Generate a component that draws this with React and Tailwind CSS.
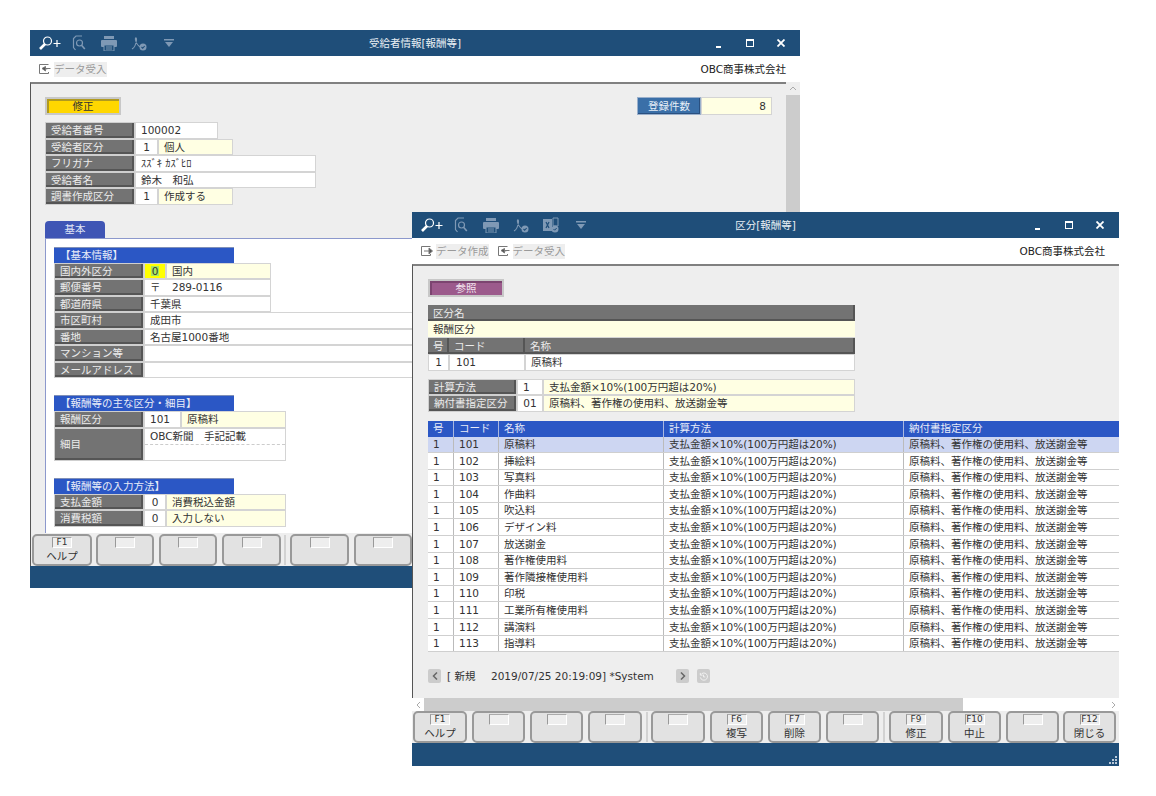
import React from "react";

const FONT = { fontFamily: '"DejaVu Sans", "Noto Sans CJK JP", sans-serif' };

function ZoomPlusIcon() {
	return (
		<svg viewBox="0 0 24 14" className="h-[14px] w-[24px]" fill="none" stroke="white" strokeWidth="1.2">
			<circle cx="9.500" cy="5" r="4" />
			<path d="M7 8 2 13" strokeWidth="2.600" />
			<path d="M15.500 7.500h7M19 4v7" strokeWidth="1.200" />
		</svg>
	);
}

function PreviewIcon() {
	return (
		<svg viewBox="0 0 14 16" className="h-[16px] w-[14px]" fill="none" stroke="#7f99b5" strokeWidth="1.200">
			<path d="M10 1H4L1.500 3.500v9L3.500 15" />
			<circle cx="7.500" cy="8" r="3" />
			<path d="m9.800 10.500 3 3.500" strokeWidth="1.600" />
		</svg>
	);
}

function PrinterIcon() {
	return (
		<svg viewBox="0 0 16 15" className="h-[15px] w-[16px]" fill="#7f99b5">
			<rect x="3" y="0" width="10" height="3" />
			<rect x="0" y="4" width="16" height="7" rx="1" />
			<rect x="3" y="9" width="10" height="6" fill="#1f4e79" stroke="#7f99b5" />
			<path d="M5 11h6M5 13h6" stroke="#7f99b5" />
		</svg>
	);
}

function PdfIcon() {
	return (
		<svg viewBox="0 0 16 15" className="h-[15px] w-[16px]" fill="none" stroke="#7f99b5" strokeWidth="1.100">
			<path d="M1 13c2-1 4-5 4.500-9 .2-3-1.500-3-1 0 .8 4 3 6 5 7" />
			<circle cx="12" cy="11" r="3.500" fill="#7f99b5" stroke="none" />
			<path d="m10.500 11 1.200 1.200 2-2.200" stroke="#1f4e79" />
		</svg>
	);
}

function ExcelIcon() {
	return (
		<svg viewBox="0 0 16 16" className="h-[16px] w-[16px]" fill="#7f99b5">
			<rect x="0" y="2" width="9" height="12" />
			<path d="M10 1h5v8h-5z" fill="none" stroke="#7f99b5" />
			<path d="m3 5 3 6M6 5l-3 6" stroke="#1f4e79" strokeWidth="1.200" />
			<circle cx="12" cy="12" r="3.500" />
			<path d="m10.500 12 1.200 1.200 2-2.200" stroke="#1f4e79" fill="none" />
		</svg>
	);
}

function DropIcon() {
	return (
		<svg viewBox="0 0 10 9" className="h-[9px] w-[10px]" fill="#7f99b5">
			<rect x="0" y="0" width="10" height="1.500" />
			<path d="M1 3h8L5 8z" />
		</svg>
	);
}

function TitleBar({ title, excel }) {
	return (
		<div className="grid h-[26px] shrink-0 grid-cols-[1fr_auto_1fr] items-center bg-[#1f4e79] text-[10.500px] text-[#e8eef4]">
			<div className="flex items-center pl-[8px]">
				<div className="mr-[2px] flex w-[24px]"><ZoomPlusIcon /></div>
				<div className="flex w-[30px] justify-center"><PreviewIcon /></div>
				<div className="flex w-[30px] justify-center"><PrinterIcon /></div>
				<div className="flex w-[30px] justify-center"><PdfIcon /></div>
				{excel && <div className="flex w-[30px] justify-center"><ExcelIcon /></div>}
				<div className="flex w-[30px] justify-center"><DropIcon /></div>
			</div>
			<div>{title}</div>
			<div className="flex items-center justify-end pr-[4px]">
				<div className="flex h-[14px] w-[31px] items-end justify-center pb-[2px]"><div className="h-[2px] w-[5px] bg-white" /></div>
				<div className="flex w-[31px] justify-center"><div className="h-[8px] w-[8px] border border-t-2 border-white" /></div>
				<div className="flex w-[31px] justify-center">
					<svg viewBox="0 0 8 8" className="h-[8px] w-[8px]" stroke="white" strokeWidth="1.800"><path d="m0.500 0.500 7 7M7.500 0.500l-7 7" /></svg>
				</div>
			</div>
		</div>
	);
}

function ExportIcon({ back }) {
	return (
		<svg viewBox="0 0 12 12" className="h-[12px] w-[12px]" fill="none" stroke="#777">
			<path d="M9.500 1.500h-9v9h9V9" />
			{back ? <path d="M11.500 5.500H6.500V3.500L3 5.500l3.500 2.500V6.500" fill="#555" /> : <path d="M3 6h5.500M8 3l3.500 3L8 9z" fill="#555" />}
		</svg>
	);
}

function ToolButton({ label, back }) {
	return (
		<div className="flex items-center gap-[3px]">
			<ExportIcon back={back} />
			<span className="flex h-[15px] items-center bg-[#eeeeee] text-[10.500px] text-[#9a9a9a]">{label}</span>
		</div>
	);
}

function Label({ children, className = "w-[90px]" }) {
	return (
		<div className={`flex shrink-0 items-center border border-[#cfcfcf] bg-[#737373] pl-[5px] text-[#ececec] shadow-[inset_-2px_-2px_0_#555] ${className}`}>
			{children}
		</div>
	);
}

function Val({ children, className = "", center }) {
	return (
		<div className={`flex shrink-0 items-center border border-[#d4d4d4] bg-white px-[5px] ${center ? "justify-center" : ""} ${className}`}>
			{children}
		</div>
	);
}

function Name({ children, className = "" }) {
	return (
		<div className={`flex shrink-0 items-center border border-[#d4d4d4] bg-[#ffffe3] pl-[5px] ${className}`}>
			{children}
		</div>
	);
}

function Row({ children }) {
	return <div className="flex h-[16.500px]">{children}</div>;
}

function SectionHead({ children }) {
	return (
		<div className="flex h-[16px] w-[180px] items-center border-t border-[#8090b8] bg-[#2b57c5] pl-[6px] text-[#e8ecf8]">{children}</div>
	);
}

function FnKey({ fkey, label, className }) {
	return (
		<div className={`flex h-[32px] flex-col items-center rounded-[5px] border-2 border-[#999999] bg-[#e2e2e2] ${className}`}>
			<div className="mt-[1px] flex h-[11px] w-[20px] items-center justify-center border-t border-r border-b border-l border-t-[#aaa] border-r-white border-b-white border-l-[#999] bg-[#eeeeee] text-[9px] leading-none text-[#333]">
				{fkey}
			</div>
			{label && <div className="mt-[1px] text-[10.500px] leading-[14px] text-[#333]">{label}</div>}
		</div>
	);
}

function FnSep() {
	return <div className="mr-[-2px] ml-[-1px] h-[30px] w-[2px] self-center bg-[#d2d2d2]" />;
}

function BackWindow() {
	return (
		<div className="absolute top-[30px] left-[30px] flex h-[558px] w-[770px] flex-col bg-white">
			<TitleBar title="受給者情報[報酬等]" />
			<div className="flex h-[26px] shrink-0 items-center pr-[14px] pl-[9px]">
				<ToolButton label="データ受入" back />
				<div className="ml-auto text-[10.500px] text-[#222]">OBC商事株式会社</div>
			</div>
			<div className="flex min-h-0 flex-1">
				<div className="flex min-w-0 flex-1 flex-col overflow-hidden border-t-2 border-l border-t-[#808080] border-l-[#555] bg-[#eeeeee] pt-[13px] pl-[14px]">
					<div className="flex items-start justify-between pr-[14px]">
						<div className="flex h-[18px] w-[76px] items-center justify-center border-2 border-[#c8c8c8] bg-[#ffd700] text-[#333] shadow-[inset_2px_2px_0_#b09a20]">修正</div>
						<div className="flex h-[18px]">
							<div className="flex w-[64px] items-center justify-center border border-[#9ab0cc] bg-[#3a6fa8] text-[#e8f0f8] shadow-[inset_-1px_-1px_0_#2a5080]">登録件数</div>
							<div className="flex w-[71px] items-center justify-end border border-[#d4d4d4] bg-[#ffffe3] pr-[5px]">8</div>
						</div>
					</div>
					<div className="mt-[7px]">
						<Row><Label>受給者番号</Label><Val className="w-[83px]">100002</Val></Row>
						<Row><Label>受給者区分</Label><Val center className="w-[23px]">1</Val><Name className="w-[75px]">個人</Name></Row>
						<Row><Label>フリガナ</Label><Val className="w-[181px]">ｽｽﾞｷ ｶｽﾞﾋﾛ</Val></Row>
						<Row><Label>受給者名</Label><Val className="w-[181px]">鈴木　和弘</Val></Row>
						<Row><Label>調書作成区分</Label><Val center className="w-[23px]">1</Val><Name className="w-[75px]">作成する</Name></Row>
					</div>
					<div className="mt-[16px] flex h-[17px] w-[60px] items-center justify-center rounded-t-[4px] bg-[#3f55b5] text-[#dfe4f5]">基本</div>
					<div className="flex-1 border-t border-l border-[#8c98cc] bg-white pt-[8px] pl-[8px]">
						<SectionHead>【基本情報】</SectionHead>
						<Row><Label>国内外区分</Label><div className="flex w-[22px] items-center justify-center border border-[#d4d4d4] bg-[#ffff00]"><span className="bg-[#a8e860] px-[1px]">0</span></div><Name className="w-[105px]">国内</Name></Row>
						<Row><Label>郵便番号</Label><Val className="w-[127px]"><span className="w-[22px]">〒</span>289-0116</Val></Row>
						<Row><Label>都道府県</Label><Val className="w-[127px]">千葉県</Val></Row>
						<Row><Label>市区町村</Label><Val className="w-[540px]">成田市</Val></Row>
						<Row><Label>番地</Label><Val className="w-[540px]">名古屋1000番地</Val></Row>
						<Row><Label>マンション等</Label><Val className="w-[540px]" /></Row>
						<Row><Label>メールアドレス</Label><Val className="w-[540px]" /></Row>
						<div className="mt-[17px]"><SectionHead>【報酬等の主な区分・細目】</SectionHead></div>
						<Row><Label>報酬区分</Label><Val className="w-[37px]">101</Val><Name className="w-[105px]">原稿料</Name></Row>
						<div className="flex h-[33px]">
							<Label>細目</Label>
							<div className="flex w-[142px] flex-col border border-[#d4d4d4] bg-white">
								<div className="flex h-[16px] items-center border-b border-dashed border-[#cccccc] px-[5px]">OBC新聞　手記記載</div>
							</div>
						</div>
						<div className="mt-[17px]"><SectionHead>【報酬等の入力方法】</SectionHead></div>
						<Row><Label>支払金額</Label><Val center className="w-[22px]">0</Val><Name className="w-[120px]">消費税込金額</Name></Row>
						<Row><Label>消費税額</Label><Val center className="w-[22px]">0</Val><Name className="w-[120px]">入力しない</Name></Row>
					</div>
				</div>
				<div className="flex w-[14px] shrink-0 flex-col bg-[#cccccc]">
					<div className="flex h-[13px] items-center justify-center bg-[#eeeeee]">
						<svg viewBox="0 0 8 5" className="h-[5px] w-[8px]" fill="none" stroke="#aaa"><path d="m1 4 3-3 3 3" /></svg>
					</div>
				</div>
			</div>
			<div className="flex h-[33px] shrink-0 items-start gap-[4px] border-l border-[#555] bg-[#eeeeee] pt-[1px] pl-[1px]">
				<FnKey fkey="F1" label="ヘルプ" className="w-[60px]" />
				<FnKey className="w-[58px]" />
				<FnKey className="ml-[1px] w-[58px]" />
				<FnKey className="ml-[1px] w-[59px]" />
				<FnSep />
				<FnKey className="ml-[2px] w-[59px]" />
				<FnKey className="ml-[1px] w-[58px]" />
			</div>
			<div className="h-[22px] shrink-0 bg-[#1f4e79]" />
		</div>
	);
}

const CALC = "支払金額×10%(100万円超は20%)";
const NOUHU = "原稿料、著作権の使用料、放送謝金等";
const ROWS = [
	["101", "原稿料"],
	["102", "挿絵料"],
	["103", "写真料"],
	["104", "作曲料"],
	["105", "吹込料"],
	["106", "デザイン料"],
	["107", "放送謝金"],
	["108", "著作権使用料"],
	["109", "著作隣接権使用料"],
	["110", "印税"],
	["111", "工業所有権使用料"],
	["112", "講演料"],
	["113", "指導料"],
];

function HeadCell({ children, className }) {
	return (
		<div className={`flex items-center bg-[#737373] pl-[5px] text-[#ececec] shadow-[inset_-2px_-2px_0_#555] ${className}`}>{children}</div>
	);
}

function DataTable() {
	return (
		<div className="mt-[9px]">
			<div className="grid h-[16px] grid-cols-[26px_45px_165px_240px_216px] bg-[#2b57c5] text-[#e8ecf8]">
				{["号", "コード", "名称", "計算方法", "納付書指定区分"].map((h) => (
					<div key={h} className="flex items-center border-r border-[#aab8e0] pl-[5px]">{h}</div>
				))}
			</div>
			{ROWS.map(([code, name], i) => (
				<div key={code} className={`grid h-[16.600px] grid-cols-[26px_45px_165px_240px_216px] border-b border-[#cfcfcf] ${i === 0 ? "bg-[#cdd6f2]" : "bg-white"}`}>
					<div className="flex items-center border-r border-[#bbbbbb] pl-[5px]">1</div>
					<div className="flex items-center border-r border-[#bbbbbb] pl-[5px]">{code}</div>
					<div className="flex items-center border-r border-[#bbbbbb] pl-[5px]">{name}</div>
					<div className="flex items-center border-r border-[#bbbbbb] pl-[5px]">{CALC}</div>
					<div className="flex items-center pl-[5px] whitespace-nowrap">{NOUHU}</div>
				</div>
			))}
		</div>
	);
}

function NavButton({ children }) {
	return (
		<div className="flex h-[14px] w-[13px] items-center justify-center rounded-[2px] bg-[#cccccc]">{children}</div>
	);
}

function FrontWindow() {
	return (
		<div className="absolute top-[212px] left-[412px] flex h-[554px] w-[707px] flex-col bg-white">
			<TitleBar title="区分[報酬等]" excel />
			<div className="flex h-[26px] shrink-0 items-center pr-[14px] pl-[9px]">
				<ToolButton label="データ作成" />
				<div className="ml-[9px]"><ToolButton label="データ受入" back /></div>
				<div className="ml-auto text-[10.500px] text-[#222]">OBC商事株式会社</div>
			</div>
			<div className="min-h-0 flex-1 overflow-hidden border-t-2 border-l border-t-[#808080] border-l-[#555] bg-[#eeeeee] pt-[13px] pl-[15px]">
				<div className="flex h-[18px] w-[76px] items-center justify-center border-2 border-[#c8c8c8] bg-[#9c5a8c] text-[#f2e4ee] shadow-[inset_2px_2px_0_#7c4470]">参照</div>
				<div className="mt-[8px] w-[427px]">
					<HeadCell className="h-[16px]">区分名</HeadCell>
					<div className="flex h-[16.500px] items-center border-b border-[#d4d4d4] bg-[#ffffe3] pl-[5px]">報酬区分</div>
					<div className="flex h-[16.500px]">
						<HeadCell className="w-[21px]">号</HeadCell>
						<HeadCell className="w-[76px]">コード</HeadCell>
						<HeadCell className="flex-1">名称</HeadCell>
					</div>
					<div className="flex h-[16.500px] bg-white">
						<div className="flex w-[21px] items-center justify-center border border-[#d4d4d4]">1</div>
						<div className="flex w-[76px] items-center border border-[#d4d4d4] pl-[6px]">101</div>
						<div className="flex flex-1 items-center border border-[#d4d4d4] pl-[5px]">原稿料</div>
					</div>
				</div>
				<div className="mt-[8px] w-[427px]">
					<Row><Label className="w-[89px]">計算方法</Label><Val className="w-[26px]">1</Val><Name className="flex-1">{CALC}</Name></Row>
					<Row><Label className="w-[89px]">納付書指定区分</Label><Val center className="w-[26px]">01</Val><Name className="flex-1">{NOUHU}</Name></Row>
				</div>
				<DataTable />
				<div className="mt-[17px] flex items-center">
					<NavButton>
						<svg viewBox="0 0 6 8" className="h-[8px] w-[6px]" fill="none" stroke="#666" strokeWidth="1.500"><path d="M5 0.500 1.500 4 5 7.500" /></svg>
					</NavButton>
					<span className="ml-[6px] w-[44px]">[ 新規</span>
					<span className="w-[185px]">2019/07/25 20:19:09] *System</span>
					<NavButton>
						<svg viewBox="0 0 6 8" className="h-[8px] w-[6px]" fill="none" stroke="#666" strokeWidth="1.500"><path d="M1 0.500 4.500 4 1 7.500" /></svg>
					</NavButton>
					<div className="ml-[8px]">
						<NavButton>
							<svg viewBox="0 0 10 10" className="h-[9px] w-[9px]" fill="none" stroke="#f4f4f4"><path d="M2 3a4 4 0 1 1-.5 3M1.500 1v2.500H4M5 3v2.500h2" /></svg>
						</NavButton>
					</div>
				</div>
			</div>
			<div className="flex h-[13px] shrink-0 bg-white">
				<div className="flex w-[12px] items-center justify-center">
					<svg viewBox="0 0 5 8" className="h-[8px] w-[5px]" fill="none" stroke="#aaa"><path d="M4 1 1 4l3 3" /></svg>
				</div>
				<div className="w-[539px] bg-[#cccccc]" />
				<div className="ml-auto flex w-[12px] items-center justify-center">
					<svg viewBox="0 0 5 8" className="h-[8px] w-[5px]" fill="none" stroke="#aaa"><path d="m1 1 3 3-3 3" /></svg>
				</div>
			</div>
			<div className="flex h-[32px] shrink-0 items-start gap-[5px] bg-[#eeeeee] pl-[1px]">
				<FnKey fkey="F1" label="ヘルプ" className="w-[54px]" />
				<FnKey className="w-[53px]" />
				<FnKey className="w-[53px]" />
				<FnKey className="w-[54px]" />
				<FnSep />
				<FnKey className="w-[54px]" />
				<FnKey fkey="F6" label="複写" className="w-[53px]" />
				<FnKey fkey="F7" label="削除" className="w-[53px]" />
				<FnKey className="w-[53px]" />
				<FnSep />
				<FnKey fkey="F9" label="修正" className="ml-[1px] w-[54px]" />
				<FnKey fkey="F10" label="中止" className="w-[53px]" />
				<FnKey className="w-[53px]" />
				<FnKey fkey="F12" label="閉じる" className="ml-[-1px] w-[53px]" />
			</div>
			<div className="relative h-[23px] shrink-0 bg-[#1f4e79]">
				<svg viewBox="0 0 9 9" className="absolute right-[1px] bottom-[1px] h-[9px] w-[9px]" fill="#b8c8d8">
					<rect x="6" y="0" width="2" height="2" /><rect x="3" y="3" width="2" height="2" /><rect x="6" y="3" width="2" height="2" />
					<rect x="0" y="6" width="2" height="2" /><rect x="3" y="6" width="2" height="2" /><rect x="6" y="6" width="2" height="2" />
				</svg>
			</div>
		</div>
	);
}

export default function App() {
	return (
		<div className="relative h-[796px] w-[1156px] overflow-hidden bg-white text-[10.500px] leading-none text-[#333]" style={FONT}>
			<BackWindow />
			<FrontWindow />
		</div>
	);
}
